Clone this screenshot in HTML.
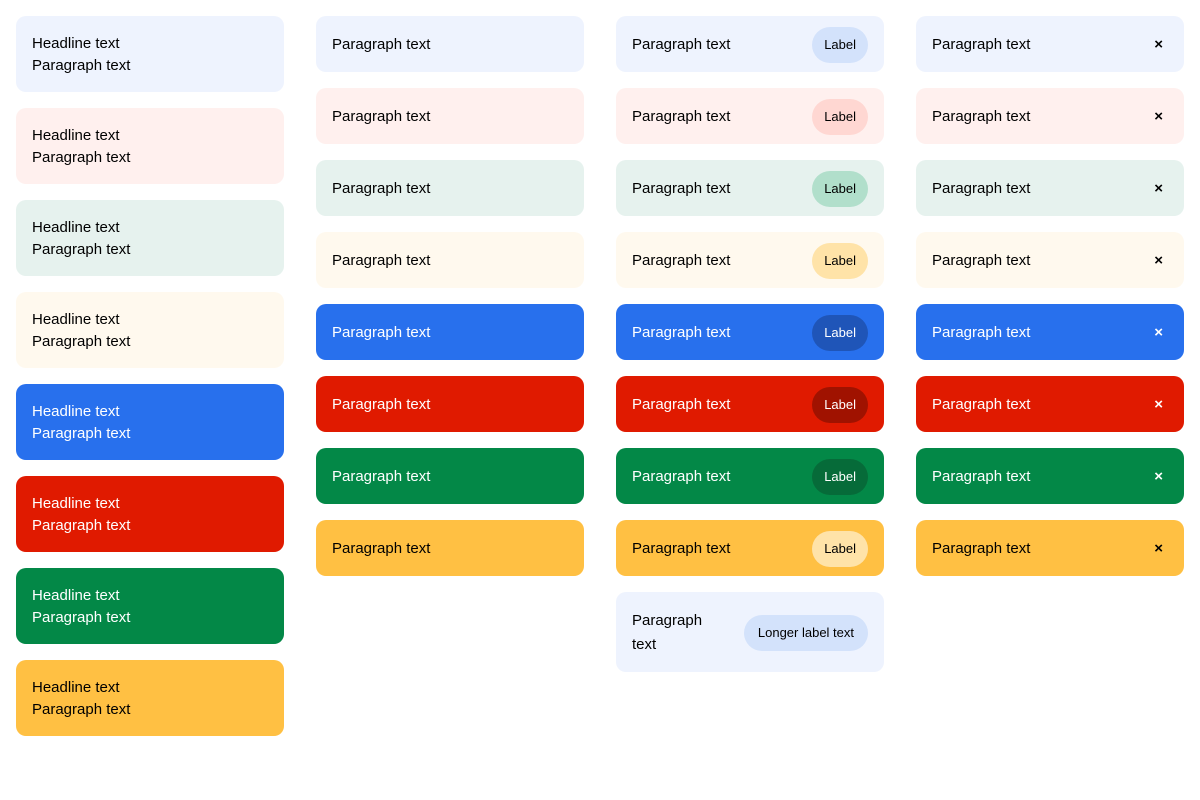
<!DOCTYPE html><html><head><style>
body{margin:0;width:1200px;height:800px;background:#fff;font-family:"Liberation Sans",Arial,sans-serif;font-size:15px;position:relative}
.c{position:absolute;width:268px;box-sizing:border-box;border-radius:10px;padding:17px 16px 15px;line-height:24px;display:flex;align-items:center;justify-content:space-between}
.h{line-height:22px;display:block}
.p{height:36px;line-height:36px;border-radius:18px;padding:0 12px;font-size:13px;margin-top:-1px}
.x{font-size:15px;font-weight:bold;margin-right:5px;margin-top:-1px}
.lb{background:#eef3fe;color:#000}.lr{background:#fff0ee;color:#000}.lg{background:#e6f2ee;color:#000}.ly{background:#fff9ee;color:#000}
.db{background:#2870ed;color:#fff}.dr{background:#e01a00;color:#fff}.dg{background:#038847;color:#fff}.dy{background:#ffc043;color:#000}
.lb .p{background:#d3e2fb}.lr .p{background:#ffd7d2}.lg .p{background:#b1dfcb}.ly .p{background:#ffe3a8}
.db .p{background:#1f55b8}.dr .p{background:#a01200}.dg .p{background:#066b39}.dy .p{background:#ffe3a8}
</style></head><body>
<div class="c h lb" style="left:16px;top:16px">Headline text<br>Paragraph text</div>
<div class="c h lr" style="left:16px;top:108px">Headline text<br>Paragraph text</div>
<div class="c h lg" style="left:16px;top:200px">Headline text<br>Paragraph text</div>
<div class="c h ly" style="left:16px;top:292px">Headline text<br>Paragraph text</div>
<div class="c h db" style="left:16px;top:384px">Headline text<br>Paragraph text</div>
<div class="c h dr" style="left:16px;top:476px">Headline text<br>Paragraph text</div>
<div class="c h dg" style="left:16px;top:568px">Headline text<br>Paragraph text</div>
<div class="c h dy" style="left:16px;top:660px">Headline text<br>Paragraph text</div>

<div class="c lb" style="left:316px;top:16px;height:56px">Paragraph text</div>
<div class="c lr" style="left:316px;top:88px;height:56px">Paragraph text</div>
<div class="c lg" style="left:316px;top:160px;height:56px">Paragraph text</div>
<div class="c ly" style="left:316px;top:232px;height:56px">Paragraph text</div>
<div class="c db" style="left:316px;top:304px;height:56px">Paragraph text</div>
<div class="c dr" style="left:316px;top:376px;height:56px">Paragraph text</div>
<div class="c dg" style="left:316px;top:448px;height:56px">Paragraph text</div>
<div class="c dy" style="left:316px;top:520px;height:56px">Paragraph text</div>

<div class="c lb" style="left:616px;top:16px;height:56px">Paragraph text<span class="p">Label</span></div>
<div class="c lr" style="left:616px;top:88px;height:56px">Paragraph text<span class="p">Label</span></div>
<div class="c lg" style="left:616px;top:160px;height:56px">Paragraph text<span class="p">Label</span></div>
<div class="c ly" style="left:616px;top:232px;height:56px">Paragraph text<span class="p">Label</span></div>
<div class="c db" style="left:616px;top:304px;height:56px">Paragraph text<span class="p">Label</span></div>
<div class="c dr" style="left:616px;top:376px;height:56px">Paragraph text<span class="p">Label</span></div>
<div class="c dg" style="left:616px;top:448px;height:56px">Paragraph text<span class="p">Label</span></div>
<div class="c dy" style="left:616px;top:520px;height:56px">Paragraph text<span class="p">Label</span></div>
<div class="c lb" style="left:616px;top:592px;height:80px"><span style="width:90px">Paragraph text</span><span class="p" style="padding:0 14px">Longer label text</span></div>

<div class="c lb" style="left:916px;top:16px;height:56px">Paragraph text<span class="x">×</span></div>
<div class="c lr" style="left:916px;top:88px;height:56px">Paragraph text<span class="x">×</span></div>
<div class="c lg" style="left:916px;top:160px;height:56px">Paragraph text<span class="x">×</span></div>
<div class="c ly" style="left:916px;top:232px;height:56px">Paragraph text<span class="x">×</span></div>
<div class="c db" style="left:916px;top:304px;height:56px">Paragraph text<span class="x">×</span></div>
<div class="c dr" style="left:916px;top:376px;height:56px">Paragraph text<span class="x">×</span></div>
<div class="c dg" style="left:916px;top:448px;height:56px">Paragraph text<span class="x">×</span></div>
<div class="c dy" style="left:916px;top:520px;height:56px">Paragraph text<span class="x">×</span></div>
</body></html>
